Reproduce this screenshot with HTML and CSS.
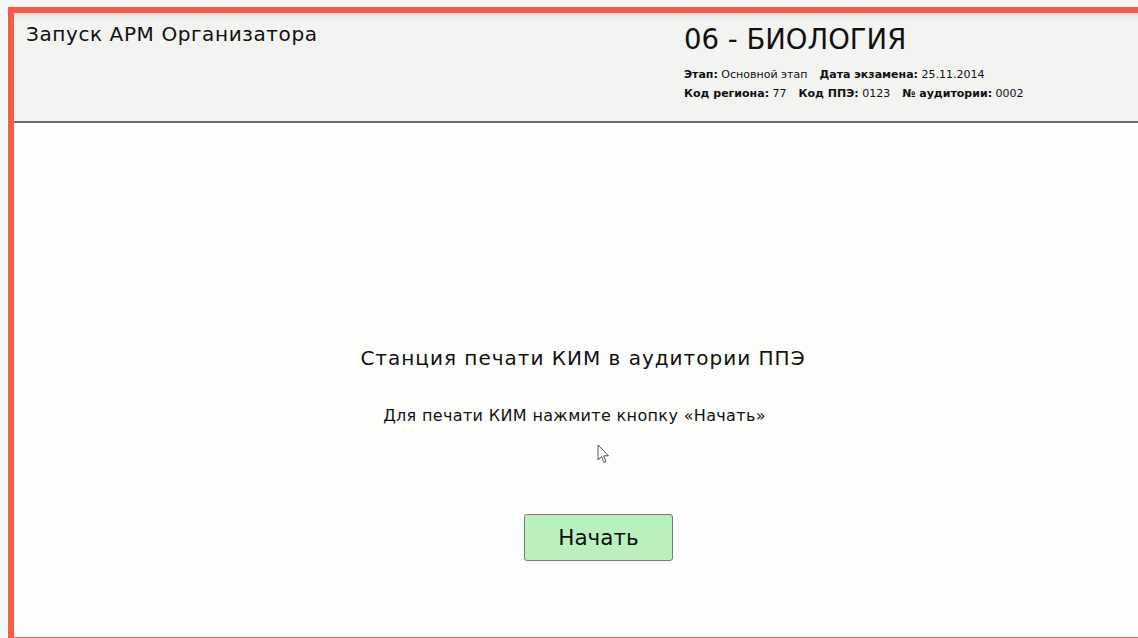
FILE: index.html
```html
<!DOCTYPE html>
<html lang="ru">
<head>
<meta charset="utf-8">
<title>Запуск АРМ Организатора</title>
<link rel="stylesheet" href="styles.css">
</head>
<body>
<div class="frame">
  <header class="topbar">
    <div class="app-title">Запуск АРМ Организатора</div>
    <div class="exam">
      <div class="subject">06 - БИОЛОГИЯ</div>
      <div class="meta">
        <span class="pair"><b>Этап:</b> Основной этап</span>
        <span class="pair"><b>Дата экзамена:</b> 25.11.2014</span>
      </div>
      <div class="meta">
        <span class="pair"><b>Код региона:</b> 77</span>
        <span class="pair"><b>Код ППЭ:</b> 0123</span>
        <span class="pair"><b>№ аудитории:</b> 0002</span>
      </div>
    </div>
  </header>
  <main class="station">
    <h1 class="station-title">Станция печати КИМ в аудитории ППЭ</h1>
    <p class="hint">Для печати КИМ нажмите кнопку «Начать»</p>
    <button class="start" type="button">Начать</button>
    <svg class="pointer" width="13" height="21" viewBox="0 0 13 21">
      <path d="M1 1 L1 16 L4.5 12.5 L7 18.5 L9 17.6 L6.6 11.8 L11.5 11.8 Z" fill="#fff" stroke="#555" stroke-width="1" stroke-linejoin="round"/>
    </svg>
  </main>
</div>
</body>
</html>
```
FILE: styles.css
```css
html, body {
  margin: 0;
  height: 100%;
  overflow: hidden;
}

body {
  background: #f2f6f9;
  font-family: Tahoma, "DejaVu Sans", Verdana, sans-serif;
  color: #111;
}

.frame {
  margin: 7px 0 0 8px;
  width: 1144px;
  height: 636px;
  box-sizing: border-box;
  border: 6px solid #f45d4b;
  border-right: 0;
  display: flex;
  flex-direction: column;
}

.topbar {
  height: 108px;
  flex: none;
  background: linear-gradient(#d8d8d6 0, #ececea 4px, #f3f3f1 9px);
  border-bottom: 2px solid #6c6c6c;
  display: flex;
  padding-left: 12px;
}

.app-title {
  width: 658px;
  padding-top: 9px;
  font-size: 20px;
  line-height: 24px;
  letter-spacing: 0.6px;
}

.exam {
  padding-top: 10px;
}

.subject {
  font-size: 27.5px;
  line-height: 32px;
  margin-bottom: 9.5px;
}

.meta {
  display: flex;
  gap: 12px;
  font-size: 11px;
  line-height: 20px;
  margin-bottom: -0.5px;
}

.meta b {
  font-weight: bold;
}

.station {
  flex: 1;
  position: relative;
  background: #fdfdfb;
  display: flex;
  flex-direction: column;
  align-items: center;
}

.station-title {
  margin: 222px 0 0 0;
  font-weight: normal;
  font-size: 20px;
  line-height: 26px;
  letter-spacing: 1px;
  white-space: nowrap;
}

.hint {
  margin: 35px 17px 0 0;
  font-size: 16px;
  line-height: 20px;
  letter-spacing: 0.35px;
  white-space: nowrap;
}

.start {
  margin: 88px 0 0 31px;
  width: 149px;
  height: 47px;
  padding: 0;
  background: #b9f0bd;
  border: 1px solid #7a7a7a;
  border-radius: 3px;
  font-family: inherit;
  font-size: 21.5px;
  color: #111;
}

.pointer {
  position: absolute;
  left: 583px;
  top: 321px;
}
```
